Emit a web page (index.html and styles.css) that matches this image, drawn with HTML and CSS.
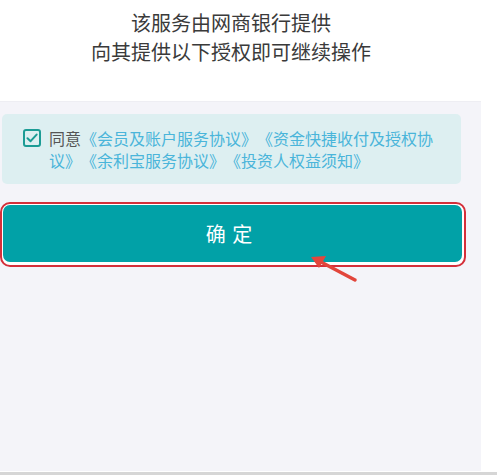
FILE: index.html
```html
<!DOCTYPE html>
<html lang="zh-CN">
<head>
<meta charset="utf-8">
<link rel="stylesheet" href="styles.css">
</head>
<body>
<div class="page">
  <header class="header">
    <p class="title">该服务由网商银行提供</p>
    <p class="title">向其提供以下授权即可继续操作</p>
  </header>
  <main class="main">
    <div class="agree">
      <span class="check">
        <svg width="12" height="10" viewBox="0 0 12 10"><path d="M1.5 5.2 L4.6 8.2 L10.6 1.6" fill="none" stroke="#1c9c95" stroke-width="2" stroke-linecap="round" stroke-linejoin="round"/></svg>
      </span>
      <p class="agree-text">同意<span class="link">《会员及账户服务协议》《资金快捷收付及授权协议》《余利宝服务协议》《投资人权益须知》</span></p>
    </div>
    <div class="btn-wrap">
      <div class="btn">确 定</div>
      <svg class="arrow" width="60" height="36" viewBox="0 0 60 36">
        <line x1="52" y1="30" x2="18" y2="12" stroke="#e2463c" stroke-width="3.5" stroke-linecap="round"/>
        <polygon points="8,7 23,6 16,18" fill="#e2463c"/>
      </svg>
    </div>
  </main>
  <div class="footer-line"></div>
</div>
</body>
</html>
```
FILE: styles.css
```css
html, body {
  margin: 0;
  padding: 0;
  background: #ffffff;
}
.page {
  width: 497px;
  height: 475px;
  display: flex;
  flex-direction: column;
  font-family: "Noto Sans CJK SC", "Noto Sans", sans-serif;
  text-spacing-trim: space-all;
}
.header {
  height: 101px;
  width: 462px;
  padding-top: 8px;
  box-sizing: border-box;
  text-align: center;
}
.title {
  margin: 0;
  font-size: 20px;
  line-height: 29px;
  color: #3a3a3a;
}
.main {
  flex: 1;
  width: 481px;
  background: #f4f4f9;
  border-top: 1px solid #eeeef3;
  box-sizing: border-box;
  padding-top: 12px;
}
.agree {
  margin-left: 2px;
  width: 459px;
  height: 70px;
  box-sizing: border-box;
  background: #ddeff1;
  border-radius: 5px;
  padding: 13px 0 0 21px;
  display: flex;
  align-items: flex-start;
}
.check {
  flex: none;
  width: 18px;
  height: 18px;
  box-sizing: border-box;
  border: 2px solid #1c9c95;
  border-radius: 3px;
  margin-top: 2px;
  display: flex;
  align-items: center;
  justify-content: center;
}
.agree-text {
  margin: 0 0 0 8px;
  width: 394px;
  font-size: 16px;
  line-height: 22px;
  color: #555555;
}
.link {
  color: #4ab5da;
}
.btn-wrap {
  position: relative;
  margin-top: 18px;
  width: 466px;
  height: 65px;
  box-sizing: border-box;
  border: 2px solid #d42f3a;
  border-radius: 10px;
  padding: 1px 2px 3px 1px;
  background: #ffffff;
}
.btn {
  height: 100%;
  background: #01a1a7;
  border-radius: 7px;
  color: #ffffff;
  font-size: 20px;
  display: flex;
  align-items: center;
  justify-content: center;
  letter-spacing: 1px;
  padding-right: 6px;
  box-sizing: border-box;
}
.arrow {
  position: absolute;
  left: 301px;
  top: 46px;
}
.footer-line {
  height: 3px;
  border-top: 1px solid #ffffff;
  background: #d6d6d6;
}
```
